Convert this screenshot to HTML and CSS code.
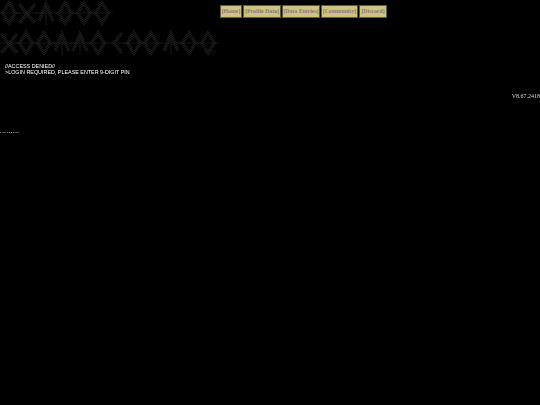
FILE: index.html
```html
<!DOCTYPE html>
<html lang="en">
<head>
<meta charset="utf-8">
<title>Access Denied</title>
<link rel="stylesheet" href="styles.css">
</head>
<body>
<header class="top">
  <svg class="logo" viewBox="0 0 220 58" width="220" height="58" aria-hidden="true">
    <defs>
      <pattern id="h" width="1.6" height="1.6" patternUnits="userSpaceOnUse" patternTransform="rotate(30)">
        <rect width="1.6" height=".7" fill="#2a2a2a"/>
      </pattern>
      <g id="d" fill="none" stroke="url(#h)" stroke-width="3.6">
        <path d="M9 3 15.5 13 9 23 2.5 13Z"/>
        <path d="M-2 13H20" stroke="#222" stroke-width=".6"/>
      </g>
      <g id="p" fill="none" stroke="url(#h)" stroke-width="3.6">
        <path d="M2 21 9 4 16 21"/>
        <path d="M-2 13H20" stroke="#222" stroke-width=".6"/>
        <path d="M9 6V25" stroke="#222" stroke-width=".8"/>
      </g>
      <g id="z" fill="none" stroke="url(#h)" stroke-width="3.6">
        <path d="M1 4 9 14 1 23"/>
        <path d="M17 4 9 14 17 23"/>
        <path d="M-2 13H20" stroke="#222" stroke-width=".6"/>
      </g>
      <g id="c" fill="none" stroke="url(#h)" stroke-width="3.6">
        <path d="M12 3 4 13 12 23"/>
        <path d="M-2 13H20" stroke="#222" stroke-width=".6"/>
      </g>
    </defs>
    <use href="#d" x="0" y="0"/><use href="#z" x="18" y="0"/><use href="#p" x="37" y="0"/>
    <use href="#d" x="56" y="0"/><use href="#d" x="75" y="0"/><use href="#d" x="93" y="0"/>
    <use href="#z" x="0" y="30"/><use href="#d" x="17" y="30"/><use href="#d" x="35" y="30"/>
    <use href="#p" x="53" y="30"/><use href="#p" x="71" y="30"/><use href="#d" x="89" y="30"/>
    <use href="#c" x="110" y="30"/><use href="#d" x="125" y="30"/><use href="#d" x="142" y="30"/>
    <use href="#p" x="162" y="30"/><use href="#d" x="180" y="30"/><use href="#d" x="199" y="30"/>
  </svg>
  <nav class="nav">
    <a class="btn" href="#">[Home]</a>
    <a class="btn" href="#">[Profile Data]</a>
    <a class="btn" href="#">[Data Entries]</a>
    <a class="btn" href="#">[Community]</a>
    <a class="btn" href="#">[Discord]</a>
  </nav>
</header>
<main class="term">
  <p class="line">//ACCESS DENIED//</p>
  <p class="line">&gt;LOGIN REQUIRED, PLEASE ENTER 9-DIGIT PIN</p>
</main>
<p class="version">V8.67.2418</p>
<p class="pin">.........</p>
</body>
</html>
```
FILE: styles.css
```css
html, body {
  margin: 0;
  height: 100%;
  background: #000;
  overflow: hidden;
}
.top {
  display: flex;
  align-items: flex-start;
}
.logo {
  display: block;
  flex: none;
}
.nav {
  display: flex;
  gap: 1px;
  padding-top: 5px;
}
.btn {
  box-sizing: border-box;
  height: 13px;
  padding: 1px 0 0;
  display: flex;
  align-items: center;
  justify-content: center;
  background: #cfc577;
  border: 1px solid #5f5b38;
  color: #8a7598;
  font: bold 5.8px/1 "Liberation Serif", serif;
  text-decoration: none;
  white-space: nowrap;
}
.btn:nth-child(1) { width: 22px; }
.btn:nth-child(2) { width: 38px; }
.btn:nth-child(3) { width: 38px; }
.btn:nth-child(4) { width: 37px; }
.btn:nth-child(5) { width: 28px; }
.term {
  padding: 5px 0 0 5px;
  filter: blur(.15px);
}
.line {
  margin: 0;
  color: #fff;
  font: 5.4px/6px "Liberation Sans", sans-serif;
  white-space: nowrap;
}
.version {
  margin: 18px 0 0;
  text-align: right;
  color: #d4d4d4;
  font: 6px/7px "Liberation Serif", serif;
  filter: blur(.15px);
}
.pin {
  margin: 28px 0 0;
  color: #ddd;
  font: bold 6px/7px "Liberation Sans", sans-serif;
  letter-spacing: .5px;
  filter: blur(.15px);
}
```
